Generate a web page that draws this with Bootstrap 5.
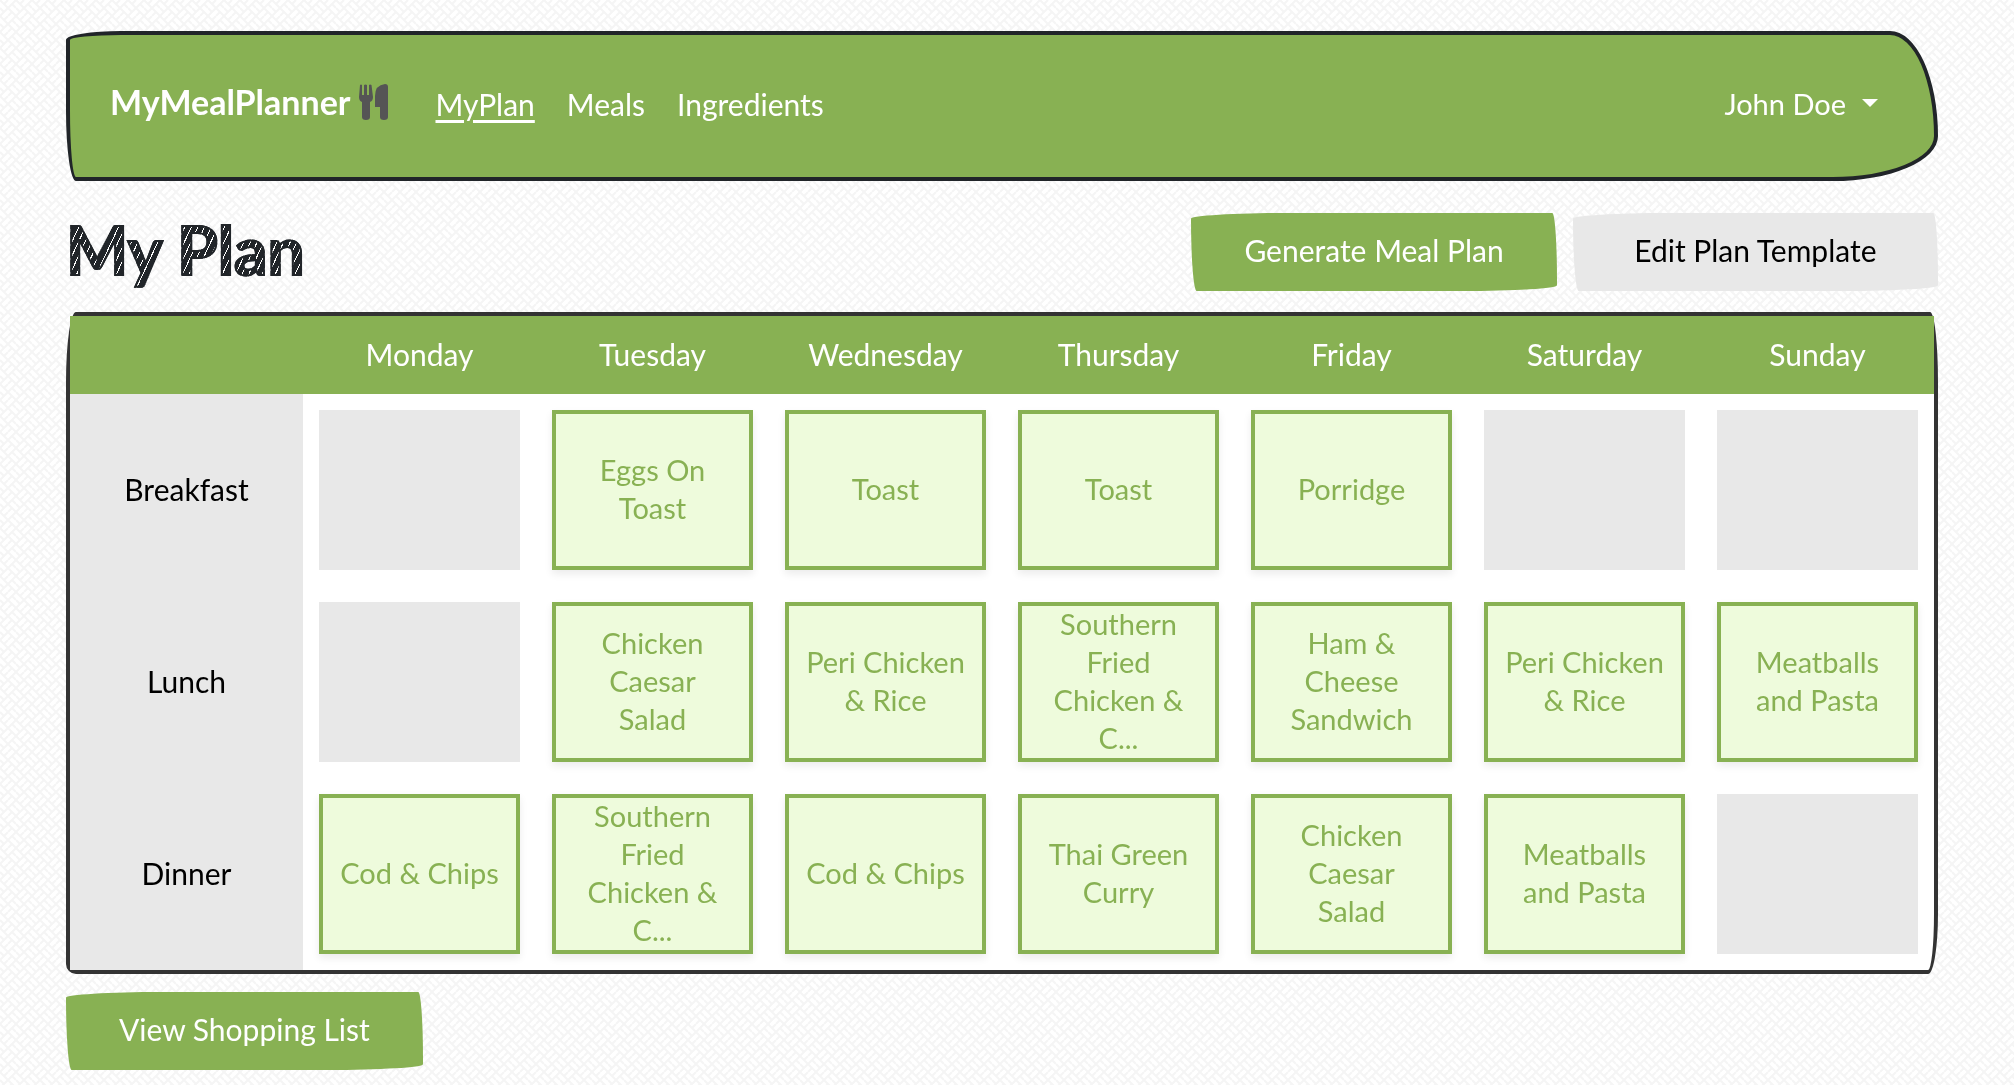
<!DOCTYPE html>
<html lang="en">
<head>
<meta charset="utf-8">
<meta name="viewport" content="width=device-width, initial-scale=1">
<title>MyMealPlanner</title>
<link href="https://cdn.jsdelivr.net/npm/bootstrap@5.3.0/dist/css/bootstrap.min.css" rel="stylesheet">
<script src="https://cdn.jsdelivr.net/npm/bootstrap@5.3.0/dist/js/bootstrap.bundle.min.js"></script>
<style>
  :root { --leaf: #88b153; --mist: #e8e8e8; --mint: #eefbdc; }
  body { font-family: Lato, sans-serif; font-size: 30px; line-height: 38px; color: #212529; background: #fff; }
  .weave { position: fixed; inset: 0; z-index: -1; width: 100%; height: 100%; }
  .page { padding: 31px 76px 15px 66px; }
  .topbar { background: var(--leaf); border: 4px solid #212529; padding: 36px 56px 40px 40px; min-height: 150px; border-radius: 55px 48px 105px 10px / 9px 105px 45px 70px; }
  .topbar a, .topbar button { color: #fff; }
  .topbar .navbar-brand { font-size: 34px; font-weight: 700; padding-bottom: 4px; margin-right: 46px; gap: 9px; }
  .topbar .nav { gap: 32px; }
  .topbar .nav a[aria-current] { text-underline-offset: 4px; }
  .user-toggle { background: none; border: 0; padding: 0; font-size: 29px; }
  .user-toggle::after { margin-left: 16px; border-top-width: 8px; border-left-width: 8px; border-right-width: 8px; vertical-align: 8px; }
  .heading-row { padding: 32px 0 21px; }
  .sketch { font-size: 66px; line-height: 74px; padding-bottom: 4px; font-weight: 700; color: transparent; -webkit-text-stroke: 2px #212529;
    background: repeating-linear-gradient(115deg, #212529 0 5px, #fff 5px 6px); background-clip: text; -webkit-background-clip: text; }
  .actions { display: grid; grid-template-columns: 1fr 1fr; gap: 16px; }
  .wobbly { --bs-btn-font-size: 30px; --bs-btn-line-height: 38px; border: 0; padding: 18px 53px 22px; border-radius: 100px 5px 100px 6px / 6px 70px 6px 76px; }
  .wobbly, .wobbly:hover { background: var(--leaf); color: #fff; }
  .wobbly.plain, .wobbly.plain:hover { background: var(--mist); color: #000; }
  .plan { border: 4px solid #333; background: #fff; border-radius: 10px 8px 10px 10px / 70px 70px 60px 10px; margin-bottom: 18px; }
  .planner { table-layout: fixed; width: 100%; text-align: center; }
  .planner thead { background: var(--leaf); color: #fff; }
  .planner th { font-weight: 400; padding-bottom: 4px; }
  .planner thead th, .planner thead td { height: 78px; }
  .planner tbody th { background: var(--mist); color: #000; }
  .planner tbody td { padding: 16px; height: 192px; }
  .meal { height: 160px; border: 4px solid var(--leaf); background: var(--mint); color: var(--leaf); font-size: 29px; padding: 0 17px 2px; box-shadow: 0 4px 8px rgba(0,0,0,.08); }
  .vacant { height: 160px; background: var(--mist); }
</style>
</head>
<body>
<svg class="weave" aria-hidden="true">
  <defs>
    <pattern id="weave" width="16" height="16" patternUnits="userSpaceOnUse">
      <path d="M0 0L16 16M16 0L0 16M0 8L4 12M12 4L16 8M4 4L8 0M8 16L12 12" stroke="#f5f5f5" stroke-width="2" fill="none"/>
    </pattern>
  </defs>
  <rect width="100%" height="100%" fill="url(#weave)"/>
</svg>
<div class="page">
  <header class="topbar d-flex align-items-center">
    <a class="navbar-brand d-flex align-items-center" href="#">MyMealPlanner
      <svg width="30" height="36" viewBox="0 0 30 36" fill="#555" aria-hidden="true"><path d="M1 1Q2 0 3 1V11H5V1Q6.500 0 8 1V11H10V1Q11 0 12.500 1L14 13Q14 17 11 18V33Q11 36 7 36T3 33V18Q0 17 0 13Z"/><path d="M26 0Q29 0 29 3V33Q29 36 25 36T21 33V23H16V12Q16 1 26 0Z"/></svg>
    </a>
    <nav class="nav flex-grow-1"><a href="#" aria-current="page">MyPlan</a><a class="text-decoration-none" href="#">Meals</a><a class="text-decoration-none" href="#">Ingredients</a></nav>
    <button class="user-toggle dropdown-toggle" type="button">John Doe</button>
  </header>
  <main>
    <div class="heading-row d-flex justify-content-between align-items-center">
      <h1 class="sketch mb-0">My Plan</h1>
      <div class="actions"><button class="btn wobbly" type="button">Generate Meal Plan</button><button class="btn wobbly plain" type="button">Edit Plan Template</button></div>
    </div>
    <div class="plan">
      <table class="planner">
        <thead><tr><td></td><th scope="col">Monday</th><th scope="col">Tuesday</th><th scope="col">Wednesday</th><th scope="col">Thursday</th><th scope="col">Friday</th><th scope="col">Saturday</th><th scope="col">Sunday</th></tr></thead>
        <tbody>
          <tr>
            <th scope="row">Breakfast</th>
            <td><div class="vacant"></div></td>
            <td><a class="meal d-flex align-items-center justify-content-center text-decoration-none" href="#">Eggs On Toast</a></td>
            <td><a class="meal d-flex align-items-center justify-content-center text-decoration-none" href="#">Toast</a></td>
            <td><a class="meal d-flex align-items-center justify-content-center text-decoration-none" href="#">Toast</a></td>
            <td><a class="meal d-flex align-items-center justify-content-center text-decoration-none" href="#">Porridge</a></td>
            <td><div class="vacant"></div></td>
            <td><div class="vacant"></div></td>
          </tr>
          <tr>
            <th scope="row">Lunch</th>
            <td><div class="vacant"></div></td>
            <td><a class="meal d-flex align-items-center justify-content-center text-decoration-none" href="#">Chicken Caesar Salad</a></td>
            <td><a class="meal d-flex align-items-center justify-content-center text-decoration-none" href="#">Peri Chicken &amp; Rice</a></td>
            <td><a class="meal d-flex align-items-center justify-content-center text-decoration-none" href="#">Southern Fried Chicken &amp; C...</a></td>
            <td><a class="meal d-flex align-items-center justify-content-center text-decoration-none" href="#">Ham &amp; Cheese Sandwich</a></td>
            <td><a class="meal d-flex align-items-center justify-content-center text-decoration-none" href="#">Peri Chicken &amp; Rice</a></td>
            <td><a class="meal d-flex align-items-center justify-content-center text-decoration-none" href="#">Meatballs and Pasta</a></td>
          </tr>
          <tr>
            <th scope="row">Dinner</th>
            <td><a class="meal d-flex align-items-center justify-content-center text-decoration-none" href="#">Cod &amp; Chips</a></td>
            <td><a class="meal d-flex align-items-center justify-content-center text-decoration-none" href="#">Southern Fried Chicken &amp; C...</a></td>
            <td><a class="meal d-flex align-items-center justify-content-center text-decoration-none" href="#">Cod &amp; Chips</a></td>
            <td><a class="meal d-flex align-items-center justify-content-center text-decoration-none" href="#">Thai Green Curry</a></td>
            <td><a class="meal d-flex align-items-center justify-content-center text-decoration-none" href="#">Chicken Caesar Salad</a></td>
            <td><a class="meal d-flex align-items-center justify-content-center text-decoration-none" href="#">Meatballs and Pasta</a></td>
            <td><div class="vacant"></div></td>
          </tr>
        </tbody>
      </table>
    </div>
    <button class="btn wobbly" type="button">View Shopping List</button>
  </main>
</div>
</body>
</html>
